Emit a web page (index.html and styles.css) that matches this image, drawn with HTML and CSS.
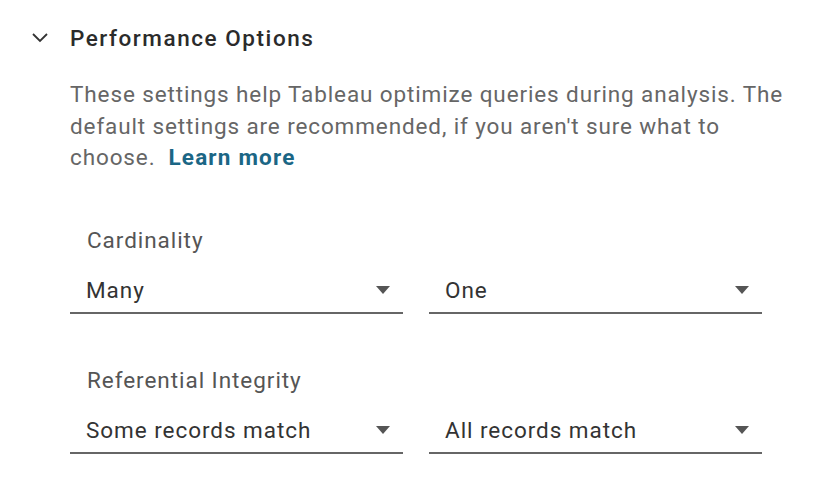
FILE: index.html
```html
<!DOCTYPE html>
<html>
<head>
<meta charset="utf-8">
<link rel="stylesheet" href="styles.css">
</head>
<body>
<section class="panel">
  <header class="head">
    <svg class="chev" width="16" height="10" viewBox="0 0 16 10"><path d="M1 1 L8 8 L15 1" fill="none" stroke="#333" stroke-width="1.8"/></svg>
    <h2 class="title">Performance Options</h2>
  </header>
  <div class="body">
    <p class="desc">These settings help Tableau optimize queries during analysis. The default settings are recommended, if you aren't sure what to choose.&nbsp; <a class="link">Learn more</a></p>
    <div class="group">
      <div class="label">Cardinality</div>
      <div class="row">
        <div class="select"><span>Many</span><i class="tri"></i></div>
        <div class="select"><span>One</span><i class="tri"></i></div>
      </div>
    </div>
    <div class="group">
      <div class="label">Referential Integrity</div>
      <div class="row">
        <div class="select"><span>Some records match</span><i class="tri"></i></div>
        <div class="select"><span>All records match</span><i class="tri"></i></div>
      </div>
    </div>
  </div>
</section>
</body>
</html>
```
FILE: styles.css
```css
html, body { margin: 0; background: #fff; }
body { font-family: Roboto, "Liberation Sans", sans-serif; color: #333; width: 832px; height: 492px; overflow: hidden; }
.panel { padding: 22px 0 0 0; }
.head { display: flex; align-items: center; height: 32px; }
.chev { margin-left: 32px; margin-right: 22px; }
.title { margin: 0; font-size: 22.5px; font-weight: 500; color: #2b2b2b; letter-spacing: 1.55px; }
.body { padding-left: 70px; }
.desc { margin: 25px 0 0; width: 730px; font-size: 22.5px; letter-spacing: 0.88px; line-height: 31.5px; color: #666; }
.link { color: #1b6685; font-weight: 700; letter-spacing: 1.2px; }
.desc + .group { margin-top: 50px; }
.group + .group { margin-top: 50px; }
.label { padding-left: 17px; font-size: 22.5px; letter-spacing: 0.95px; line-height: 32px; color: #555; }
.row { display: flex; gap: 26px; margin-top: 18px; }
.select { width: 333px; height: 40px; box-sizing: border-box; border-bottom: 2px solid #666; display: flex; align-items: center; justify-content: space-between; padding: 0 13px 6px 16px; font-size: 22.5px; letter-spacing: 0.95px; color: #333; }
.tri { width: 0; height: 0; border-left: 7px solid transparent; border-right: 7px solid transparent; border-top: 8px solid #555; }
```
